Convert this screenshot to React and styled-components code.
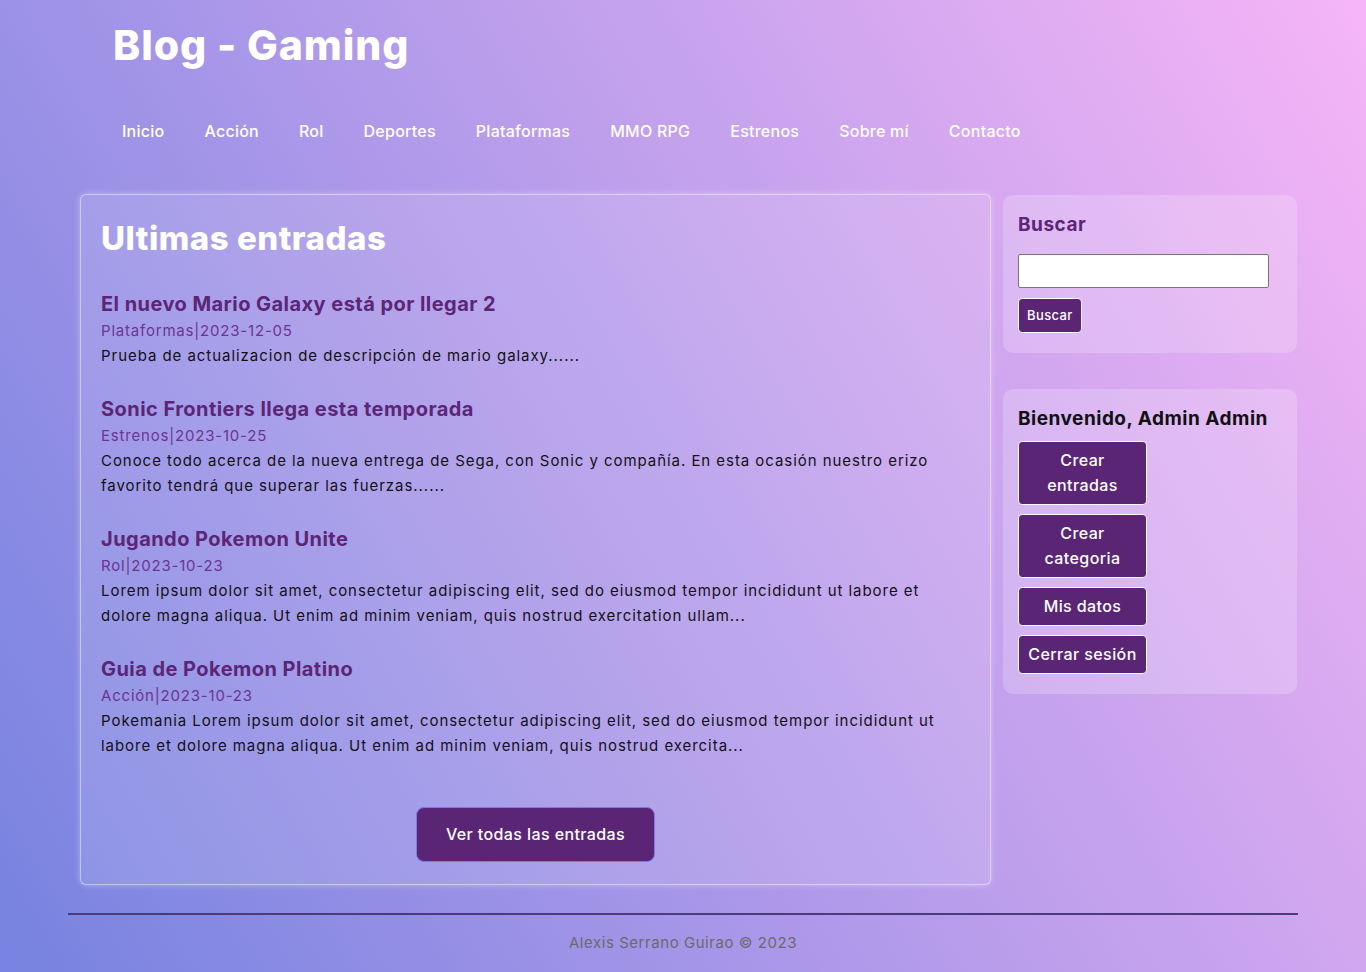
import styled, { createGlobalStyle } from "styled-components";

const GlobalStyle = createGlobalStyle`
  html, body {
    margin: 0;
    padding: 0;
  }
  body {
    min-height: 972px;
    font-family: Inter, "Noto Sans", sans-serif;
    background: linear-gradient(60deg, #7683e0 0%, #f6b5f6 100%);
    background-attachment: fixed;
  }
`;

const posts = [
  {
    title: "El nuevo Mario Galaxy está por llegar 2",
    category: "Plataformas",
    date: "2023-12-05",
    text: "Prueba de actualizacion de descripción de mario galaxy......",
  },
  {
    title: "Sonic Frontiers llega esta temporada",
    category: "Estrenos",
    date: "2023-10-25",
    text: "Conoce todo acerca de la nueva entrega de Sega, con Sonic y compañía. En esta ocasión nuestro erizo favorito tendrá que superar las fuerzas......",
  },
  {
    title: "Jugando Pokemon Unite",
    category: "Rol",
    date: "2023-10-23",
    text: "Lorem ipsum dolor sit amet, consectetur adipiscing elit, sed do eiusmod tempor incididunt ut labore et dolore magna aliqua. Ut enim ad minim veniam, quis nostrud exercitation ullam...",
  },
  {
    title: "Guia de Pokemon Platino",
    category: "Acción",
    date: "2023-10-23",
    text: "Pokemania Lorem ipsum dolor sit amet, consectetur adipiscing elit, sed do eiusmod tempor incididunt ut labore et dolore magna aliqua. Ut enim ad minim veniam, quis nostrud exercita...",
  },
];

const menu = ["Inicio", "Acción", "Rol", "Deportes", "Plataformas", "MMO RPG", "Estrenos", "Sobre mí", "Contacto"];

const Container = styled.div`
  width: 1230px;
  margin: 0 auto;
`;

const Header = styled.header`
  padding-left: 45px;
`;

const Logo = styled.h1`
  margin: 20px 0 0;
  font-size: 41px;
  line-height: 50px;
  font-weight: 800;
  color: #fff;
  letter-spacing: 0.9px;
`;

const Nav = styled.nav`
  display: flex;
  gap: 40px;
  margin-top: 49px;
  padding-left: 9px;
  a {
    color: #fff;
    text-decoration: none;
    font-size: 16px;
    line-height: 24px;
    font-weight: 500;
    letter-spacing: 0.25px;
  }
`;

const Layout = styled.div`
  display: grid;
  grid-template-columns: 911px 294px;
  column-gap: 12px;
  align-items: start;
  margin-top: 51px;
  padding-left: 12px;
`;

const Main = styled.main`
  padding: 20px;
  border: 1px solid rgba(255, 255, 255, 0.45);
  border-radius: 6px;
  background: rgba(255, 255, 255, 0.12);
  box-shadow: 0 0 6px rgba(255, 255, 255, 0.35);
`;

const Heading = styled.h2`
  margin: 0 0 30px;
  font-size: 33px;
  line-height: 46px;
  font-weight: 800;
  color: #fff;
  letter-spacing: 0.5px;
`;

const Post = styled.article`
  margin-bottom: 28px;
  &:last-of-type {
    margin-bottom: 27px;
  }
`;

const PostTitle = styled.h3`
  margin: 0;
  font-size: 20px;
  line-height: 27px;
  font-weight: 700;
  color: #5c2577;
  letter-spacing: 0.45px;
`;

const Meta = styled.div`
  font-size: 15px;
  line-height: 25px;
  color: #6b3592;
  font-weight: 400;
  letter-spacing: 0.8px;
`;

const Excerpt = styled.p`
  margin: 0;
  font-size: 15px;
  line-height: 25px;
  color: #141018;
  letter-spacing: 0.95px;
`;

const Center = styled.div`
  display: flex;
  justify-content: center;
  padding: 22px 0 2px;
`;

const Button = styled.button`
  font-family: inherit;
  background: #5b2576;
  color: #fff;
  cursor: pointer;
  border: 1px solid ${(p) => (p.$big ? "#7a7ae0" : "#fff")};
  border-radius: ${(p) => (p.$big ? "8px" : "4px")};
  font-size: ${(p) => p.$size || "16px"};
  line-height: 25px;
  font-weight: 500;
  letter-spacing: 0.4px;
`;

const BigButton = styled(Button)`
  width: 239px;
  height: 55px;
`;

const Sidebar = styled.aside`
  display: flex;
  flex-direction: column;
  gap: 36px;
  padding-top: 1px;
`;

const Box = styled.section`
  padding: 15px 15px 20px;
  border-radius: 10px;
  background: rgba(255, 255, 255, 0.2);
`;

const BoxTitle = styled.h4`
  margin: 0;
  padding-top: 1px;
  font-size: 19px;
  line-height: 28px;
  font-weight: 700;
  color: ${(p) => p.$color || "#111"};
  letter-spacing: 0.5px;
`;

const SearchInput = styled.input`
  display: block;
  box-sizing: border-box;
  width: 251px;
  height: 34px;
  margin-top: 15px;
  border: 1px solid #777;
  border-radius: 2px;
  background: #fff;
`;

const SmallButton = styled(Button)`
  margin-top: 10px;
  height: 35px;
  padding: 0 8px;
`;

const Actions = styled.div`
  display: flex;
  flex-direction: column;
  gap: 9px;
  margin-top: 8px;
`;

const ActionButton = styled(Button)`
  width: 129px;
  padding: 6px 8px;
`;

const Footer = styled.footer`
  margin-top: 28px;
  border-top: 2px solid #4b3b7b;
  text-align: center;
  padding: 16px 0 14px;
  color: #6a6a6a;
  font-size: 15px;
  line-height: 24px;
  letter-spacing: 0.55px;
`;

export default function App() {
  return (
    <>
      <GlobalStyle />
      <Container>
        <Header>
          <Logo>Blog - Gaming</Logo>
          <Nav>
            {menu.map((m) => (
              <a key={m} href="#">{m}</a>
            ))}
          </Nav>
        </Header>
        <Layout>
          <Main>
            <Heading>Ultimas entradas</Heading>
            {posts.map((p) => (
              <Post key={p.title}>
                <PostTitle>{p.title}</PostTitle>
                <Meta>{p.category}|{p.date}</Meta>
                <Excerpt>{p.text}</Excerpt>
              </Post>
            ))}
            <Center>
              <BigButton $big>Ver todas las entradas</BigButton>
            </Center>
          </Main>
          <Sidebar>
            <Box>
              <BoxTitle $color="#5c2577">Buscar</BoxTitle>
              <SearchInput type="text" />
              <SmallButton $size="13px">Buscar</SmallButton>
            </Box>
            <Box>
              <BoxTitle>Bienvenido, Admin Admin</BoxTitle>
              <Actions>
                <ActionButton>Crear entradas</ActionButton>
                <ActionButton>Crear categoria</ActionButton>
                <ActionButton>Mis datos</ActionButton>
                <ActionButton>Cerrar sesión</ActionButton>
              </Actions>
            </Box>
          </Sidebar>
        </Layout>
        <Footer>Alexis Serrano Guirao © 2023</Footer>
      </Container>
    </>
  );
}
